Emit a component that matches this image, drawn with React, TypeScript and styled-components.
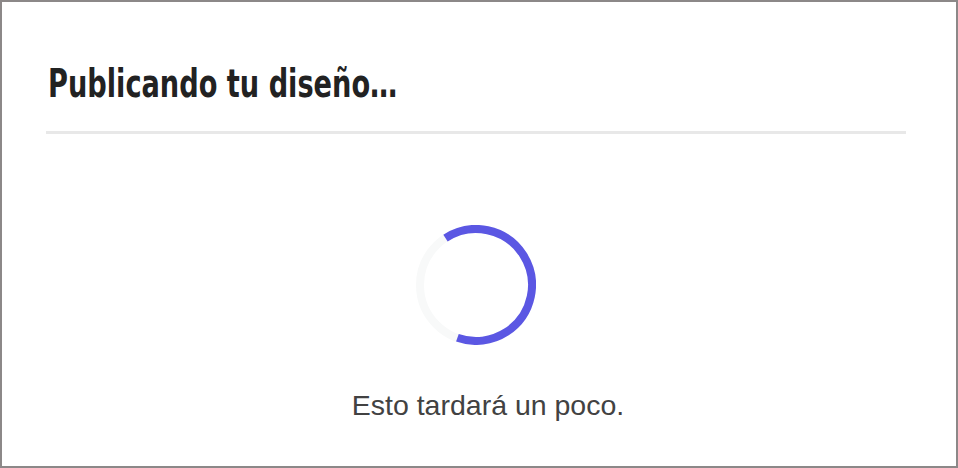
import styled, { createGlobalStyle } from 'styled-components';

const GlobalStyle = createGlobalStyle`
  html, body { margin: 0; padding: 0; background: #ffffff; }
  * { box-sizing: border-box; }
`;

const Frame = styled.div`
  width: 958px;
  height: 468px;
  border: 2px solid #8c8888;
  background: #ffffff;
  padding: 63px 50px 0 44px;
  display: flex;
  flex-direction: column;
`;

const Title = styled.h1`
  margin: 0 0 0 2px;
  font-family: "DejaVu Sans Condensed", "DejaVu Sans", sans-serif;
  font-weight: 700;
  font-size: 39px;
  line-height: 38px;
  color: #222222;
  white-space: nowrap;
`;

// the reference face is a bold condensed sans; squeeze DejaVu to match its width
const TitleText = styled.span`
  display: inline-block;
  transform: scaleX(0.775);
  transform-origin: left center;
`;

const Divider = styled.hr`
  margin: 28px 0 0;
  border: 0;
  height: 3px;
  background: #e8e8e8;
`;

const Body = styled.div`
  display: flex;
  flex-direction: column;
  align-items: center;
  padding-top: 91px;
`;

const SpinnerSvg = styled.svg`
  width: 120px;
  height: 120px;
  display: block;
`;

const Message = styled.p`
  margin: 44px 0 0 24px;
  font-family: "Liberation Sans", Arial, sans-serif;
  font-size: 28.5px;
  line-height: 32px;
  color: #424242;
`;

const R = 56;
const CIRC = 2 * Math.PI * R;

function Spinner() {
  const arc = (232 / 360) * CIRC;
  return (
    <SpinnerSvg viewBox="0 0 120 120">
      <circle cx="60" cy="60" r={R} fill="none" stroke="#f8f9f9" strokeWidth="8" />
      <circle
        cx="60"
        cy="60"
        r={R}
        fill="none"
        stroke="#5b57e3"
        strokeWidth="8"
        strokeDasharray={`${arc} ${CIRC}`}
        transform="rotate(-123 60 60)"
      />
    </SpinnerSvg>
  );
}

export default function App() {
  return (
    <>
      <GlobalStyle />
      <Frame>
        <Title>
          <TitleText>Publicando tu diseño…</TitleText>
        </Title>
        <Divider />
        <Body>
          <Spinner />
          <Message>Esto tardará un poco.</Message>
        </Body>
      </Frame>
    </>
  );
}
